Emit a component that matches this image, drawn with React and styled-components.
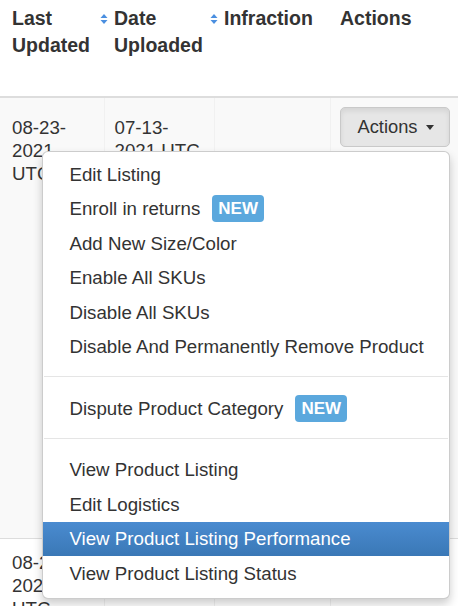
import React from 'react';
import styled, { createGlobalStyle } from 'styled-components';

const GlobalStyle = createGlobalStyle`
  html, body {
    margin: 0;
    padding: 0;
    background: #fff;
  }
  body {
    font-family: "Liberation Sans", Arial, Helvetica, sans-serif;
    color: #333;
  }
`;

const Table = styled.table`
  width: 458px;
  table-layout: fixed;
  border-collapse: collapse;
  border-spacing: 0;
`;

const HeadCell = styled.th`
  position: relative;
  text-align: left;
  vertical-align: top;
  font-size: 19.5px;
  font-weight: bold;
  line-height: 27px;
  padding: 5px 8px 0 ${p => (p.$first ? '12px' : '10px')};
  height: 97px;
  border-bottom: 2px solid #dddddd;
  box-sizing: border-box;
`;

const SortIcon = styled.svg`
  position: absolute;
  right: -4px;
  top: 13px;
`;

const BodyRow = styled.tr`
  background: ${p => (p.$striped ? '#f9f9f9' : '#fff')};
  height: ${p => p.$height}px;
  border-top: 1px solid #dddddd;
`;

const Cell = styled.td`
  vertical-align: top;
  font-size: 18.7px;
  line-height: 23px;
  padding: ${p => (p.$pad ? `${p.$pad}px` : '18px')} 10px 0 ${p => (p.$first ? '12px' : '10px')};
  border-left: ${p => (p.$first ? 'none' : '1px solid #f1f1f1')};
`;

const ActionCell = styled(Cell)`
  padding: 9px 6px 0 9px;
`;

const Anchor = styled.div`
  position: relative;
  display: inline-block;
`;

const ActionButton = styled.button`
  display: flex;
  align-items: center;
  gap: 9px;
  height: 40px;
  padding: 0 15px 0 17px;
  font-family: inherit;
  font-size: 18.3px;
  color: #333;
  background: #e6e6e6;
  border: 1px solid #c9c9c9;
  border-radius: 5px;
  box-shadow: inset 0 3px 5px rgba(0, 0, 0, 0.08);
  cursor: pointer;
`;

const Caret = styled.span`
  width: 0;
  height: 0;
  border-top: 5px solid #333;
  border-left: 4.5px solid transparent;
  border-right: 4.5px solid transparent;
`;

const Menu = styled.ul`
  position: absolute;
  top: calc(100% + 4px);
  right: 0;
  width: 408px;
  box-sizing: border-box;
  margin: 0;
  padding: 5px 0 7px;
  list-style: none;
  background: #fff;
  border: 1px solid rgba(0, 0, 0, 0.2);
  border-radius: 6px;
  box-shadow: 0 5px 10px rgba(0, 0, 0, 0.2);
  z-index: 10;
`;

const Item = styled.li`
  display: flex;
  align-items: center;
  height: 34.5px;
  padding: 0 26px;
  font-size: 18.7px;
  white-space: nowrap;
  color: ${p => (p.$active ? '#fff' : '#333')};
  background: ${p =>
    p.$active ? 'linear-gradient(to bottom, #4a8bd0 0%, #3a78b6 100%)' : 'transparent'};
  cursor: pointer;
`;

const Divider = styled.li`
  height: 1px;
  margin: 12px 1px 13px;
  background: #e5e5e5;
  border-bottom: 1px solid #fff;
`;

const NewBadge = styled.span`
  display: inline-flex;
  align-items: center;
  justify-content: center;
  margin-left: 12px;
  height: 27px;
  padding: 0 6px;
  box-sizing: border-box;
  background: #5ba8dd;
  color: #fff;
  font-size: 17px;
  font-weight: bold;
  border-radius: 4px;
`;

const Sort = () => (
  <SortIcon width="8" height="12" viewBox="0 0 8 12">
    <path d="M4 1 L7.5 5 H0.5 Z" fill="#4a8fe0" />
    <path d="M4 11 L7.5 7 H0.5 Z" fill="#4a8fe0" />
  </SortIcon>
);

const groups = [
  [
    { label: 'Edit Listing' },
    { label: 'Enroll in returns', isNew: true },
    { label: 'Add New Size/Color' },
    { label: 'Enable All SKUs' },
    { label: 'Disable All SKUs' },
    { label: 'Disable And Permanently Remove Product' },
  ],
  [{ label: 'Dispute Product Category', isNew: true }],
  [
    { label: 'View Product Listing' },
    { label: 'Edit Logistics' },
    { label: 'View Product Listing Performance', active: true },
    { label: 'View Product Listing Status' },
  ],
];

function ActionsMenu() {
  return (
    <Menu>
      {groups.map((group, gi) => (
        <React.Fragment key={gi}>
          {gi > 0 && <Divider />}
          {group.map(item => (
            <Item key={item.label} $active={item.active}>
              {item.label}
              {item.isNew && <NewBadge>NEW</NewBadge>}
            </Item>
          ))}
        </React.Fragment>
      ))}
    </Menu>
  );
}

export default function App() {
  return (
    <>
      <GlobalStyle />
      <Table>
        <colgroup>
          <col style={{ width: 104 }} />
          <col style={{ width: 110 }} />
          <col style={{ width: 116 }} />
          <col style={{ width: 128 }} />
        </colgroup>
        <thead>
          <tr>
            <HeadCell $first>
              Last Updated
              <Sort />
            </HeadCell>
            <HeadCell>
              Date Uploaded
              <Sort />
            </HeadCell>
            <HeadCell>Infraction</HeadCell>
            <HeadCell>Actions</HeadCell>
          </tr>
        </thead>
        <tbody>
          <BodyRow $striped $height={441}>
            <Cell $first>08-23-2021 UTC</Cell>
            <Cell>07-13-2021 UTC</Cell>
            <Cell />
            <ActionCell>
              <Anchor>
                <ActionButton>
                  Actions <Caret />
                </ActionButton>
                <ActionsMenu />
              </Anchor>
            </ActionCell>
          </BodyRow>
          <BodyRow $height={80}>
            <Cell $first $pad={12}>08-23-2021 UTC</Cell>
            <Cell $pad={12}>07-13-2021 UTC</Cell>
            <Cell $pad={12} />
            <ActionCell />
          </BodyRow>
        </tbody>
      </Table>
    </>
  );
}
